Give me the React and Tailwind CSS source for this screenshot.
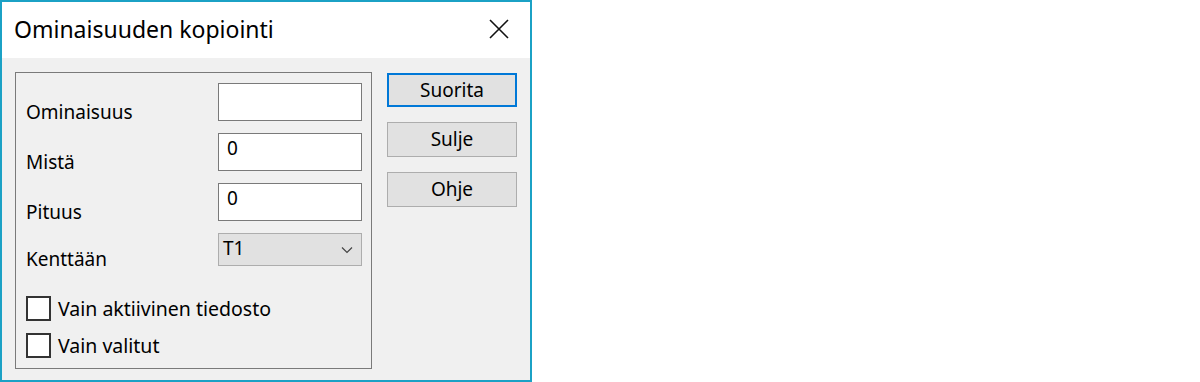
import { useState } from 'react';

const font = { fontFamily: '"Noto Sans", "Open Sans", sans-serif' };

function Field({ label, value }) {
  return (
    <div className="flex items-start h-[38px]">
      <div className="w-[202px] pl-[10px] pt-[17px] text-[19px] leading-[24px] text-black">{label}</div>
      <input
        className="w-[144px] h-[38px] border border-[#7a7a7a] bg-white px-[8px] pb-[8px] text-[19px] text-black outline-none"
        defaultValue={value}
      />
    </div>
  );
}

function Check({ label }) {
  const [on, setOn] = useState(false);
  return (
    <label className="flex items-center gap-[7px] pl-[10px] h-[25px] cursor-default">
      <span
        onClick={() => setOn(!on)}
        className="w-[25px] h-[25px] border-2 border-[#333333] bg-white flex items-center justify-center text-[16px]"
      >
        {on ? '✓' : ''}
      </span>
      <span className="text-[19.5px] leading-[24px] text-black">{label}</span>
    </label>
  );
}

export default function App() {
  return (
    <div className="w-[532px] h-[382px] border-2 border-[#1ba1c5] flex flex-col bg-[#f0f0f0]" style={font}>
      {/* title bar */}
      <div className="h-[56px] bg-white flex items-center justify-between pl-[12px] pr-[20px]">
        <span className="text-[23px] text-black pb-[2px]">Ominaisuuden kopiointi</span>
        <svg width="22" height="22" viewBox="0 0 22 22" className="mb-[2px]">
          <path d="M2 2 L20 20 M20 2 L2 20" stroke="#111" strokeWidth="1.6" fill="none" />
        </svg>
      </div>

      {/* body */}
      <div className="flex-1 flex pl-[13px] pt-[14px] gap-[15px]">
        <div className="w-[357px] h-[297px] border border-[#7a7a7a] pt-[10px] flex flex-col">
          <div className="flex flex-col gap-[12px]">
            <Field label="Ominaisuus" value="" />
            <Field label="Mistä" value="0" />
            <Field label="Pituus" value="0" />
            <div className="flex items-start h-[33px]">
              <div className="w-[202px] pl-[10px] pt-[14px] text-[19px] leading-[24px] text-black">Kenttään</div>
              <div className="w-[144px] h-[33px] border border-[#adadad] bg-[#e1e1e1] flex items-center justify-between pl-[4px] pr-[8px]">
                <span className="text-[19px] leading-[24px] pb-[3px] text-black">T1</span>
                <svg width="12" height="8" viewBox="0 0 12 8">
                  <path d="M1 1.5 L6 6.5 L11 1.5" stroke="#444" strokeWidth="1.2" fill="none" />
                </svg>
              </div>
            </div>
          </div>
          <div className="flex flex-col gap-[12px] mt-[30px]">
            <Check label="Vain aktiivinen tiedosto" />
            <Check label="Vain valitut" />
          </div>
        </div>

        <div className="flex flex-col gap-[15px] w-[130px] pt-[1px]">
          <button className="h-[34px] border-2 border-[#0078d7] bg-[#e1e1e1] text-[19px] text-black leading-none">Suorita</button>
          <button className="h-[35px] border border-[#adadad] bg-[#e1e1e1] text-[19px] text-black leading-none">Sulje</button>
          <button className="h-[35px] border border-[#adadad] bg-[#e1e1e1] text-[19px] text-black leading-none">Ohje</button>
        </div>
      </div>
    </div>
  );
}
